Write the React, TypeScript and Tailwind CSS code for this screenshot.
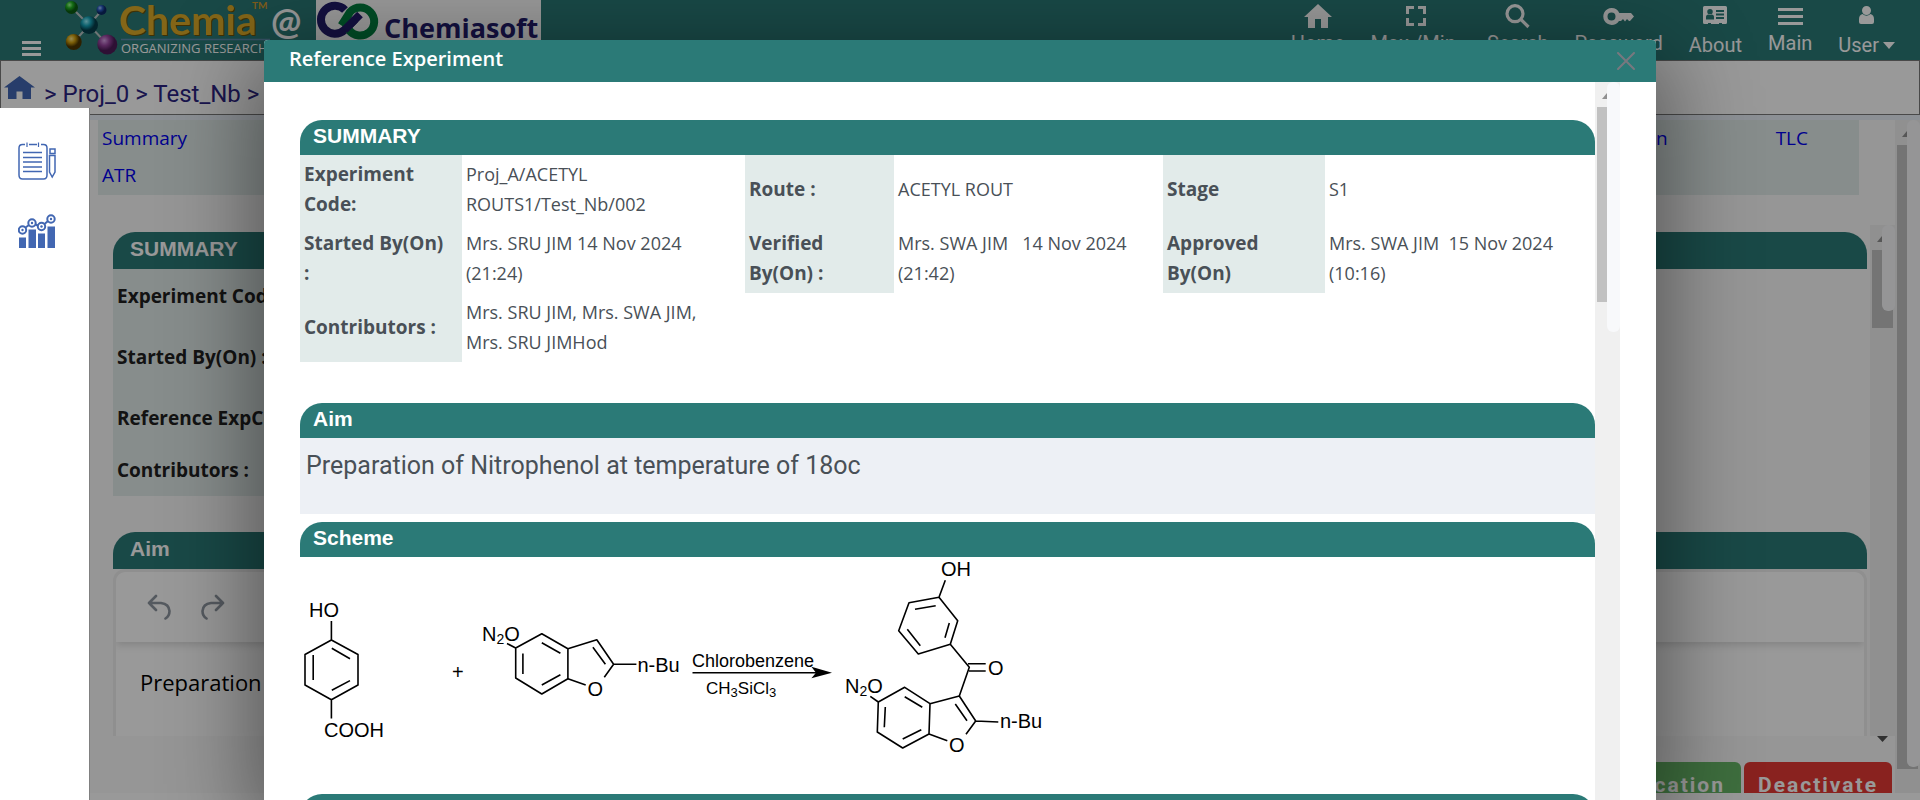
import React from "react";

const UI = "font-['Open_Sans','Noto_Sans',sans-serif]";

type BarProps = { thumb: string; cover: string; className?: string };

function ScrollTrack({ thumb, cover, className = "" }: BarProps) {
  return (
    <div aria-hidden="true" className={`relative w-[25px] shrink-0 bg-[#f0f0f0] ${className}`}>
      <svg viewBox="0 0 10 6" className="absolute left-[7px] top-[11px] h-[6px] w-[10px]">
        <path d="M5 0L10 6H0z" fill="#909090" />
      </svg>
      <div className={`absolute left-[2px] top-[25px] w-[21px] bg-[#c1c1c1] ${thumb}`} />
      <div className={`absolute right-0 top-0 rounded-md bg-[#f8f9fb] ${cover}`} />
    </div>
  );
}

function SectionTitle({ children, className = "h-[35px] pl-[13px]" }: { children?: React.ReactNode; className?: string }) {
  return (
    <h2
      className={`flex items-center rounded-t-[22px] bg-[#2b7a77] pb-[3px] font-['Liberation_Sans',Arial,sans-serif] text-[21px] font-bold text-white ${className}`}
    >
      {children}
    </h2>
  );
}

function ChemiaLogo() {
  return (
    <svg viewBox="58 0 252 60" className="h-[60px] w-[252px] shrink-0" role="img" aria-label="Chemia organizing research">
      <defs>
        <radialGradient id="g1" cx="35%" cy="30%"><stop offset="0" stopColor="#a6ff9a" /><stop offset=".5" stopColor="#22b522" /><stop offset="1" stopColor="#0b5c12" /></radialGradient>
        <radialGradient id="g2" cx="35%" cy="30%"><stop offset="0" stopColor="#a9c8ff" /><stop offset=".5" stopColor="#2a5cc0" /><stop offset="1" stopColor="#0c2866" /></radialGradient>
        <radialGradient id="g3" cx="35%" cy="30%"><stop offset="0" stopColor="#9af4ff" /><stop offset=".5" stopColor="#16a3b8" /><stop offset="1" stopColor="#053f4c" /></radialGradient>
        <radialGradient id="g4" cx="35%" cy="30%"><stop offset="0" stopColor="#ffe98a" /><stop offset=".5" stopColor="#cf9e0c" /><stop offset="1" stopColor="#4d3600" /></radialGradient>
        <radialGradient id="g5" cx="35%" cy="30%"><stop offset="0" stopColor="#d9a2e8" /><stop offset=".5" stopColor="#97459f" /><stop offset="1" stopColor="#4d1c58" /></radialGradient>
      </defs>
      <path d="M72 8L89 25L102 10M74 42L89 25L107 44" fill="none" stroke="#b9c4c4" strokeWidth="2" />
      <circle cx="71.500" cy="7.500" r="6.500" fill="url(#g1)" />
      <circle cx="101.500" cy="10" r="5" fill="url(#g2)" />
      <circle cx="89" cy="25" r="9" fill="url(#g3)" />
      <circle cx="73.700" cy="42" r="8" fill="url(#g4)" />
      <circle cx="107.300" cy="44.500" r="10" fill="url(#g5)" />
      <text x="119" y="35" fontSize="41" fontWeight="700" className="font-['Lato',sans-serif] drop-shadow-[1px_1px_0_#6b5208]" fill="#dcaa28">Chemia</text>
      <text x="252" y="9" fontSize="10" fontWeight="700" className="font-['Lato',sans-serif]" fill="#d49a2c">TM</text>
      <path d="M121 39.500H270" stroke="#5d8bab" strokeWidth="1.500" />
      <text x="121" y="53" fontSize="13" className="font-['Open_Sans',sans-serif]" fill="#fff">ORGANIZING RESEARCH</text>
      <text x="271" y="35" fontSize="36" fontWeight="700" className="font-['Lato',sans-serif]" fill="#fff">@</text>
    </svg>
  );
}

function ChemiasoftLogo() {
  return (
    <svg viewBox="316 0 225 60" className="ml-[6px] h-[60px] w-[225px] shrink-0 bg-white" role="img" aria-label="Chemiasoft">
      <g fill="none" strokeWidth="8">
        <path d="M357 20A14 14 0 0 1 362 6A14 14 0 1 1 347 29" stroke="none" />
        <path d="M345 10A14 14 0 1 0 344.500 30L360 14.500" stroke="#221b6b" />
        <path d="M341.500 25.500L350 12A14 14 0 1 1 349 30" stroke="#008040" />
        <path d="M344.500 30L355 19.500" stroke="#221b6b" />
      </g>
      <text x="384" y="38" fontSize="27" fontWeight="700" className="font-['Open_Sans',sans-serif]" fill="#221b6b">Chemiasoft</text>
    </svg>
  );
}

const navItems = [
  { label: "Home", low: false, icon: <path d="M14 0L28 13H24V24H17V15H11V24H4V13H0z" />, box: "0 0 28 24", size: "h-[24px] w-[28px] mt-1" },
  { label: "Max./Min.", low: false, icon: <path d="M0 0H8V3H3V8H0zM12 0H20V8H17V3H12zM0 12H3V17H8V20H0zM17 12H20V20H12V17H17z" />, box: "0 0 20 20", size: "h-[20px] w-[20px] mt-[6px]" },
  { label: "Search", low: false, icon: <path d="M10 1.700A8 8 0 1 0 10 17.700A8 8 0 1 0 10 1.700M15.500 15L23.500 23" fill="none" stroke="currentColor" strokeWidth="3.200" />, box: "0 0 26 25", size: "h-[25px] w-[26px] mt-1" },
  { label: "Password", low: false, icon: <path fillRule="evenodd" d="M8.500 0A8.500 8.500 0 0 1 16.300 5H28L31 8.500L27 13H26L24 11L22 13.500L20 11L18 13H16A8.500 8.500 0 1 1 8.500 0M8.500 4.500A4 4 0 1 0 8.500 12.500A4 4 0 1 0 8.500 4.500" />, box: "0 0 31 17", size: "h-[17px] w-[31px] mt-2" },
  { label: "About", low: true, icon: <path fillRule="evenodd" d="M1.500 0H22.500Q24 0 24 1.500V16.500Q24 18 22.500 18H19V17H16V18H8V17H5V18H1.500Q0 18 0 16.500V1.500Q0 0 1.500 0M13 4V6H21V4zM13 7.500V9.500H21V7.500zM13 11V13H21V11zM7 3A2.600 2.600 0 1 0 7 8.500A2.600 2.600 0 1 0 7 3M3 13.500H11V11Q11 8.500 8.500 8.500Q7 9.500 5.500 8.500Q3 8.500 3 11z" />, box: "0 0 24 18", size: "h-[18px] w-[24px] mt-[6px]" },
  { label: "Main", low: false, icon: <path d="M0 0H25V3H0zM0 7H25V10H0zM0 14H25V17H0z" />, box: "0 0 25 17", size: "h-[17px] w-[25px] mt-2" },
  { label: "User", low: true, caret: true, icon: <path d="M7.500 0A4.500 4.500 0 1 1 7.500 9A4.500 4.500 0 1 1 7.500 0M3.500 8Q7.500 11.500 11.500 8Q15 9 15 13V16Q15 18 13 18H2Q0 18 0 16V13Q0 9 3.500 8" />, box: "0 0 15 18", size: "h-[18px] w-[15px] mt-[6px]" },
];

function TopBar() {
  return (
    <header className="flex h-[60px] items-start bg-[#2b7a77] pr-[25px]">
      <button aria-label="Toggle menu" className="ml-[22px] mr-[17px] mt-[41px] flex w-[19px] flex-col gap-[3px]">
        <span className="h-[3px] bg-white" />
        <span className="h-[3px] bg-white" />
        <span className="h-[3px] bg-white" />
      </button>
      <ChemiaLogo />
      <ChemiasoftLogo />
      <nav className="ml-auto flex gap-[26px] font-['Roboto',sans-serif] text-[20px] leading-[24px] text-white">
        {navItems.map((n) => (
          <a key={n.label} href="#" className="flex flex-col items-center">
            <span className={n.low ? "flex h-[33px] items-start" : "flex h-[31px] items-start"}>
              <svg viewBox={n.box} fill="currentColor" className={n.size}>{n.icon}</svg>
            </span>
            <span className="flex items-center gap-1">
              {n.label}
              {n.caret && (
                <svg viewBox="0 0 12 7" className="h-[7px] w-[12px]" fill="currentColor"><path d="M0 0H12L6 7z" /></svg>
              )}
            </span>
          </a>
        ))}
      </nav>
    </header>
  );
}

function Breadcrumb() {
  return (
    <div className="flex h-[55px] items-center border border-[#7a7a7a] bg-white pl-[3px] font-['Roboto',sans-serif] text-[24px] leading-[28px] text-[#2c2482]">
      <a href="#" aria-label="Home" className="mb-[1px]">
        <svg viewBox="0 0 31 23" className="h-[23px] w-[31px]" fill="#4267b2">
          <path d="M15.500 0L31 11.500H27V23H18.500V15.500H12.500V23H4V11.500H0z" />
        </svg>
      </a>
      <span className="ml-[9px] mt-[13px]">&gt; Proj_0 &gt; Test_Nb &gt;</span>
    </div>
  );
}

function Sidebar() {
  return (
    <aside className="absolute bottom-0 left-0 top-[108px] flex w-[90px] flex-col items-start gap-[33px] border-r border-[#808080] bg-white pl-[18px] pt-[34px]">
      <button aria-label="Notebook">
        <svg viewBox="0 0 38 38" className="block h-[38px] w-[38px]" fill="none" stroke="#4267b2" strokeWidth="1.500">
          <path d="M7 2.500H4.500Q1 2.500 1 6V33Q1 37 4.500 37H25.500Q29 37 29 33V6Q29 2.500 25.500 2.500H23M11 2.500H19" />
          <path d="M9 .5V5M20.500 .5V5" strokeWidth="1.200" />
          <path d="M5 10.500H24M5 15.500H24M5 20H24M5 25H24M5 29.500H24" />
          <path d="M32 7H37V11.500H32zM31.500 13.500H37V30L34.200 35L31.500 30z" />
        </svg>
      </button>
      <button aria-label="Analytics">
        <svg viewBox="0 0 38 35" className="block h-[35px] w-[38px]" fill="#4267b2">
          <path d="M1 24.500H8V35H1zM10.500 16.500H18V35H10.500zM20 20.500H27V35H20zM29.500 13.500H37V35H29.500z" />
          <g fill="none" stroke="#4267b2" strokeWidth="2">
            <circle cx="4.500" cy="17" r="3.700" /><circle cx="14" cy="10" r="3.700" /><circle cx="23.500" cy="13.500" r="3.700" /><circle cx="33" cy="6" r="3.700" />
            <path d="M7.500 14.500L11 12M17.500 11.500L20 12.500M26.500 11L30 8" />
          </g>
          <circle cx="4.500" cy="17" r="1.200" /><circle cx="14" cy="10" r="1.200" /><circle cx="23.500" cy="13.500" r="1.200" /><circle cx="33" cy="6" r="1.200" />
        </svg>
      </button>
    </aside>
  );
}

const pageRows = [
  { label: "Experiment Code:", h: "h-[54px]" },
  { label: "Started By(On) :", h: "h-[68px]" },
  { label: "Reference ExpCode:", h: "h-[54px]" },
  { label: "Contributors :", h: "h-[51px]" },
];

function Page() {
  return (
    <div className="flex min-h-0 flex-1 flex-col">
      <TopBar />
      <Breadcrumb />
      <div className="h-[5px] bg-[#e9f1f8]" />
      <main className={`flex h-[673px] bg-[#fafafa] ${UI}`}>
        <div className="flex min-w-0 flex-1 flex-col pl-[90px]">
          <nav className="ml-2 mr-9 flex h-[75px] justify-between bg-[#e2ebea] pl-1 pr-[51px] text-[19px] leading-[37px] text-[#0000ee]">
            <div className="flex flex-col">
              <a href="#">Summary</a>
              <a href="#">ATR</a>
            </div>
            <div className="flex gap-[108px]">
              <a href="#">Conclusion</a>
              <a href="#">TLC</a>
            </div>
          </nav>
          <div className="mt-[30px] flex h-[525px]">
            <div className="ml-[23px] flex min-w-0 flex-1 flex-col pt-[7px]">
              <SectionTitle className="h-[37px] pl-[17px]">SUMMARY</SectionTitle>
              <table className="w-full border-collapse text-left text-[19px] text-[#212121]">
                <tbody>
                  {pageRows.map((r) => (
                    <tr key={r.label}>
                      <th className={`w-[220px] whitespace-nowrap bg-[#e2ebea] px-1 font-bold ${r.h}`}>{r.label}</th>
                      <td />
                    </tr>
                  ))}
                </tbody>
              </table>
              <SectionTitle className="mt-9 h-[37px] pl-[17px]">Aim</SectionTitle>
              <div className="h-[167px] overflow-hidden rounded-t-xl border-x-[3px] border-t-[3px] border-[#eeeeee] bg-white">
                <div className="flex h-[70px] items-center gap-[30px] pl-[31px] text-[#8e96a0] shadow-[0_3px_8px_rgba(0,0,0,0.15)]">
                  <button aria-label="Undo">
                    <svg viewBox="0 0 24 26" className="block h-[26px] w-[24px]" fill="none" stroke="currentColor" strokeWidth="2.600" strokeLinecap="round" strokeLinejoin="round">
                      <path d="M9 2L2 9L9 16M2 9H14Q22 10 22.500 17Q22.500 22 18.500 24.500" />
                    </svg>
                  </button>
                  <button aria-label="Redo">
                    <svg viewBox="0 0 24 26" className="block h-[26px] w-[24px]" fill="none" stroke="currentColor" strokeWidth="2.600" strokeLinecap="round" strokeLinejoin="round">
                      <path d="M15 2L22 9L15 16M22 9H10Q2 10 1.500 17Q1.500 22 5.500 24.500" />
                    </svg>
                  </button>
                </div>
                <p className="pl-6 pt-[22px] text-[22px] leading-[36px] text-black">Preparation of Nitrophenol at temperature of 18oc</p>
              </div>
            </div>
            <div className="ml-[3px] flex flex-col">
              <ScrollTrack className="h-[511px]" thumb="h-[78px]" cover="w-[13px] h-[86px]" />
              <svg viewBox="0 0 11 6" className="ml-[7px] h-[6px] w-[11px]" fill="#505050"><path d="M0 0H11L5.500 6z" /></svg>
            </div>
          </div>
          <div className="mr-[3px] mt-[12px] flex h-[31px] items-start justify-end gap-[3px] overflow-hidden font-['Roboto',sans-serif] text-[21px] font-bold leading-[46px] tracking-[2px] text-white">
            <button className="h-[46px] rounded-md bg-[#68b868] px-4">Verification</button>
            <button className="h-[46px] rounded-md bg-[#e53935] px-[14px]">Deactivate</button>
          </div>
        </div>
        <ScrollTrack thumb="h-[624px]" cover="w-[13px] h-[647px]" />
      </main>
      <div className="flex-1 bg-white" />
    </div>
  );
}

function N2O({ x, y }: { x: number; y: number }) {
  return (
    <text x={x} y={y}>N<tspan dy="3" fontSize="14">2</tspan><tspan dy="-3">O</tspan></text>
  );
}

function Scheme() {
  return (
    <svg viewBox="300 557 900 237" className="block h-[237px] w-[900px]" role="img" aria-label="Reaction scheme">
      <g fill="none" stroke="#000" strokeWidth="1.600" strokeLinejoin="round">
        <path d="M331.400 621V640L358 654.500V685L331.400 699.700L305 685V654.500L331.400 640M331.400 699.700V718.500" />
        <path d="M331.800 648.300L350 658.700M313.200 655V680M331.800 690.300L350 680.600" />
        <path d="M507 643.500L515.700 648L541.800 633.700L567.900 648.700V678.700L541.800 694L515.700 678V648" />
        <path d="M522.900 653.500V674M541.800 642.700L560.400 653.300M541.800 685L560.400 674.700" />
        <path d="M567.900 648.700L596.800 639.700L613.600 664.300L604.300 677.300M567.900 678.700L585.700 685M592.900 647.300L605.400 664.300M613.600 664.300H636.400" />
        <path d="M692.500 672.700H818" />
        <path d="M945.300 580.300L939 597.300L909 602.700L898.700 630.700L918.300 654L950.300 644.300L957.700 620.700L939 597.300" />
        <path d="M915 609.300L935.700 605.700M907.300 629.300L920.300 645.700M949.300 623L945 637.700" />
        <path d="M950.300 644.300L969.300 667.300L959.300 696M968 663.700H985.700M969 671H985.700" />
        <path d="M959.300 696L930 703.700L929 734L947.300 740.700M959.300 696L975.700 721L966 734.300M955.300 704L967 720.700M975.700 721L998.300 722" />
        <path d="M930 703.700L904.700 687.300L878.300 702L877.300 732L902.700 748L929 734M870.300 696.300L878.300 702" />
        <path d="M904.700 696.700L922.300 707.300M885.300 707L884.300 727.300M902.700 739L921.300 729.700" />
      </g>
      <path d="M811.400 666.700L832 672.700L811.400 678.300L816 672.700z" />
      <g className="font-['Liberation_Sans',Arial,sans-serif]" fontSize="20" fill="#000">
        <text x="309" y="617">HO</text>
        <text x="324" y="737">COOH</text>
        <text x="452" y="679">+</text>
        <N2O x={482} y={641} />
        <text x="587.500" y="696">O</text>
        <text x="637.500" y="672">n-Bu</text>
        <text x="692" y="667" fontSize="18">Chlorobenzene</text>
        <text x="706" y="694" fontSize="17">CH<tspan dy="3" fontSize="13">3</tspan><tspan dy="-3">SiCl</tspan><tspan dy="3" fontSize="13">3</tspan></text>
        <text x="941" y="576">OH</text>
        <text x="988" y="675">O</text>
        <N2O x={845} y={693} />
        <text x="949" y="751.500">O</text>
        <text x="1000" y="728">n-Bu</text>
      </g>
    </svg>
  );
}

const th = "whitespace-pre-line bg-[#e2ebea] px-1 pb-[5px] pt-[3px] text-left text-[19px] font-bold";
const td = "whitespace-pre-line px-1 pb-[5px] pt-[3px]";

function Modal() {
  return (
    <section
      role="dialog"
      aria-labelledby="dialog-title"
      className={`absolute inset-x-[264px] bottom-0 top-10 flex flex-col overflow-hidden rounded-t bg-white text-[#495057] shadow-[0_24px_90px_10px_rgba(0,0,0,0.45)] ${UI}`}
    >
      <header className="flex h-[42px] shrink-0 items-center justify-between bg-[#2b7a77] pl-[25px] pr-[21px]">
        <h1 id="dialog-title" className="pb-1 text-[20px] font-semibold leading-[28px] text-white">Reference Experiment</h1>
        <button aria-label="Close">
          <svg viewBox="0 0 18 18" className="block h-[18px] w-[18px]" stroke="#78787f" strokeWidth="2" strokeLinecap="round">
            <path d="M1 1L17 17M17 1L1 17" />
          </svg>
        </button>
      </header>
      <div className="flex min-h-0 flex-1 pl-9 pr-9">
        <div className="min-w-0 flex-1 overflow-hidden pt-[38px]">
          <SectionTitle>SUMMARY</SectionTitle>
          <table className="w-full table-fixed border-collapse text-[18px] leading-[30px]">
            <colgroup>
              <col className="w-[162px]" />
              <col className="w-[283px]" />
              <col className="w-[149px]" />
              <col className="w-[269px]" />
              <col className="w-[162px]" />
              <col />
            </colgroup>
            <tbody>
              <tr className="h-[69px]">
                <th className={th}>{"Experiment\nCode:"}</th>
                <td className={td}>{"Proj_A/ACETYL\nROUTS1/Test_Nb/002"}</td>
                <th className={th}>Route :</th>
                <td className={td}>ACETYL ROUT</td>
                <th className={th}>Stage</th>
                <td className={td}>S1</td>
              </tr>
              <tr className="h-[69px]">
                <th className={th}>{"Started By(On)\n:"}</th>
                <td className={td}>{"Mrs. SRU JIM 14 Nov 2024\n(21:24)"}</td>
                <th className={th}>{"Verified\nBy(On) :"}</th>
                <td className={td}>{"Mrs. SWA JIM \u00a0 14 Nov 2024\n(21:42)"}</td>
                <th className={th}>{"Approved\nBy(On)"}</th>
                <td className={td}>{"Mrs. SWA JIM \u00a015 Nov 2024\n(10:16)"}</td>
              </tr>
              <tr className="h-[69px]">
                <th className={th}>Contributors :</th>
                <td className={td}>{"Mrs. SRU JIM, Mrs. SWA JIM,\nMrs. SRU JIMHod"}</td>
                <td colSpan={4} />
              </tr>
            </tbody>
          </table>
          <div className="mt-[41px]">
            <SectionTitle>Aim</SectionTitle>
            <p className="h-[76px] bg-[#edf0f5] pl-[6px] pt-[10px] font-['Roboto',sans-serif] text-[25px] leading-[36px]">
              Preparation of Nitrophenol at temperature of 18oc
            </p>
          </div>
          <div className="mt-2">
            <SectionTitle>Scheme</SectionTitle>
            <Scheme />
          </div>
          <SectionTitle />
        </div>
        <ScrollTrack thumb="h-[195px]" cover="h-[250px] w-[13px]" />
      </div>
    </section>
  );
}

export default function App() {
  return (
    <div className="relative flex h-screen flex-col overflow-hidden bg-white">
      <Page />
      <div className="absolute inset-0 bg-black/40" />
      <Modal />
      <Sidebar />
    </div>
  );
}
